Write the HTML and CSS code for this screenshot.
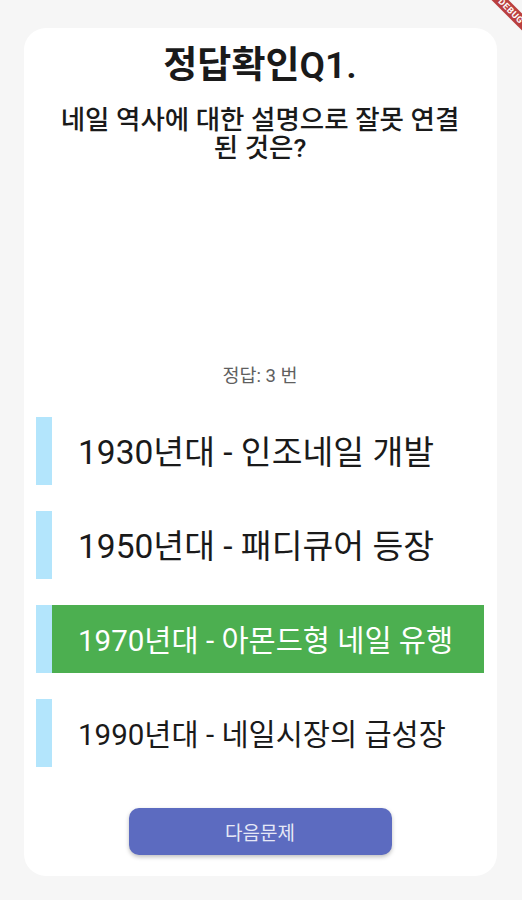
FILE: index.html
```html
<!DOCTYPE html>
<html lang="ko">
<head>
<meta charset="utf-8">
<link rel="stylesheet" href="styles.css">
</head>
<body>
<div class="page">
  <div class="card">
    <h1 class="title">정답확인Q1.</h1>
    <p class="question">네일 역사에 대한 설명으로 잘못 연결<br>된 것은?</p>
    <p class="answer">정답: 3 번</p>
    <ul class="options">
      <li class="option"><span class="bar"></span><span class="label">1930년대 - 인조네일 개발</span></li>
      <li class="option"><span class="bar"></span><span class="label">1950년대 - 패디큐어 등장</span></li>
      <li class="option correct"><span class="bar"></span><span class="label fit">1970년대 - 아몬드형 네일 유행</span></li>
      <li class="option"><span class="bar"></span><span class="label fit">1990년대 - 네일시장의 급성장</span></li>
    </ul>
    <button class="next">다음문제</button>
  </div>
</div>
<div class="debug"><span>DEBUG</span></div>
</body>
</html>
```
FILE: styles.css
```css
html, body {
  margin: 0;
  padding: 0;
  width: 522px;
  height: 900px;
  overflow: hidden;
  background: #f6f6f6;
  font-family: Roboto, "Noto Sans CJK KR", sans-serif;
  color: #1c1c1c;
}
.page {
  padding: 28px 25px 0 24px;
}
.card {
  background: #ffffff;
  border-radius: 22px;
  height: 848px;
  box-sizing: border-box;
  padding: 16px 13px 0 12px;
  display: flex;
  flex-direction: column;
  align-items: stretch;
}
.title {
  margin: 0;
  text-align: center;
  font-size: 37px;
  line-height: 44px;
  font-weight: 600;
  color: #1a1a1a;
}
.question {
  margin: 18px 0 0;
  text-align: center;
  font-size: 26.5px;
  line-height: 28px;
  font-weight: 500;
  color: #1a1a1a;
}
.answer {
  margin: 204px 0 0;
  text-align: center;
  font-size: 18.5px;
  line-height: 20px;
  color: #5f5f5f;
}
.options {
  list-style: none;
  margin: 31px 0 0;
  padding: 0;
  display: flex;
  flex-direction: column;
  gap: 26px;
}
.option {
  display: flex;
  height: 68px;
}
.bar {
  width: 16px;
  flex: none;
  background: #b3e5fc;
}
.label {
  flex: 1;
  display: flex;
  align-items: center;
  padding-left: 26px;
  padding-bottom: 4px;
  box-sizing: border-box;
  font-size: 33.5px;
  white-space: nowrap;
  color: #1a1a1a;
}
.label.fit {
  font-size: 29.5px;
  padding-bottom: 3px;
}
.option.correct .label {
  background: #4caf50;
  color: #ffffff;
}
.next {
  align-self: center;
  margin-top: 41px;
  width: 263px;
  height: 47px;
  border: none;
  border-radius: 10px;
  background: #5c6bc0;
  color: #e6e8f6;
  font-family: Roboto, "Noto Sans CJK KR", sans-serif;
  font-size: 19px;
  box-shadow: 0 2px 4px rgba(0,0,0,0.25);
}
.debug {
  position: absolute;
  left: 461px;
  top: 5px;
  width: 100px;
  height: 12px;
  background: rgba(175, 30, 30, 0.85);
  transform: rotate(45deg);
  display: flex;
  justify-content: center;
  align-items: center;
}
.debug span {
  color: #fff;
  font-size: 9px;
  font-weight: 700;
  letter-spacing: 0.5px;
  font-family: Roboto, sans-serif;
}
```
